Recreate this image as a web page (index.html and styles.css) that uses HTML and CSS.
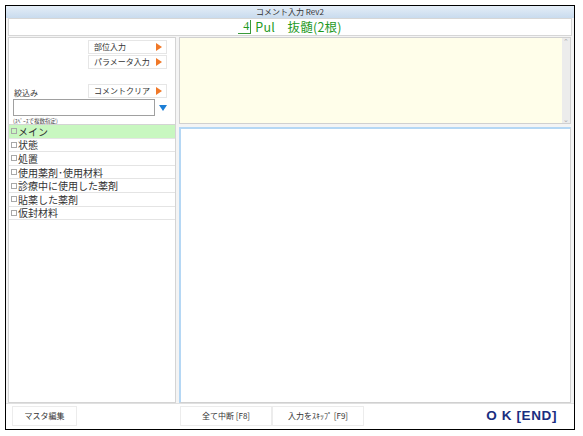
FILE: index.html
```html
<!DOCTYPE html>
<html lang="ja">
<head>
<meta charset="utf-8">
<title>コメント入力 Rev2</title>
<link rel="stylesheet" href="styles.css">
</head>
<body>
<div class="window">
  <div class="titlebar">コメント入力 Rev2</div>
  <div class="header"><span class="tooth">4</span><span class="hdr-text">Pul　抜髄(2根)</span></div>
  <div class="main">
    <div class="left">
      <div class="tools">
        <div class="btn-row r1"><div class="tbtn">部位入力<span class="tri"></span></div></div>
        <div class="btn-row"><div class="tbtn">パラメータ入力<span class="tri"></span></div></div>
        <div class="filter-row">
          <div class="filter-label">絞込み</div>
          <div class="tbtn">コメントクリア<span class="tri"></span></div>
        </div>
        <div class="input-row">
          <div class="input"></div>
          <span class="down"></span>
        </div>
        <div class="hint">(ｽﾍﾟｰｽで複数指定)</div>
      </div>
      <div class="list">
        <div class="item sel"><span class="cb"></span>メイン</div>
        <div class="item"><span class="cb"></span>状態</div>
        <div class="item"><span class="cb"></span>処置</div>
        <div class="item"><span class="cb"></span>使用薬剤･使用材料</div>
        <div class="item"><span class="cb"></span>診療中に使用した薬剤</div>
        <div class="item"><span class="cb"></span>貼薬した薬剤</div>
        <div class="item"><span class="cb"></span>仮封材料</div>
      </div>
    </div>
    <div class="right">
      <div class="memo">
        <div class="scroll"><span class="up">&#8963;</span><span class="dn">&#8964;</span></div>
      </div>
      <div class="editor"></div>
    </div>
  </div>
  <div class="footer">
    <div class="fbtn master">マスタ編集</div>
    <div class="fbtn stop">全て中断 [F8]</div>
    <div class="fbtn skip">入力をｽｷｯﾌﾟ [F9]</div>
    <div class="ok">O K&nbsp;[END]</div>
  </div>
</div>
</body>
</html>
```
FILE: styles.css
```css
* { box-sizing: border-box; }
html, body { margin: 0; padding: 0; background: #fff; }
body { font-family: "Noto Sans CJK JP", "Noto Sans", sans-serif; }

.window {
  margin: 5px 0 0 5px;
  width: 570px;
  height: 425px;
  border: 1px solid #000;
  background: #f4f4f4;
  display: flex;
  flex-direction: column;
}
.titlebar {
  height: 12px;
  background: linear-gradient(#e4edf7, #c9dbee);
  font-size: 8px;
  line-height: 12px;
  text-align: center;
  color: #333;
}
.header {
  height: 18px;
  margin: 0 2px 0 2px;
  background: #fff;
  border: 1px solid #d6d6d6;
  display: flex;
  justify-content: center;
  align-items: center;
  color: #1f9a1f;
  font-size: 12.5px;
  line-height: 16px;
}
.tooth {
  display: inline-block;
  padding: 0 1px 0 5px;
  border-bottom: 1px solid #3a9a3a;
  border-right: 1px solid #3a9a3a;
  line-height: 13px;
  height: 14px;
  margin-right: 4px;
  font-size: 12px;
  font-family: "Liberation Serif", serif;
}
.hdr-text { letter-spacing: 0.2px; }

.main {
  flex: 1;
  display: flex;
  gap: 3px;
  padding: 1px 3px 0 2px;
}
.left {
  width: 168px;
  display: flex;
  flex-direction: column;
  border: 1px solid #d4d4d4;
  background: #fff;
}
.tools {
  height: 87px;
  padding: 2px 8px 0 4px;
  border-bottom: 1px solid #d4d4d4;
  display: flex;
  flex-direction: column;
}
.btn-row { display: flex; justify-content: flex-end; margin-bottom: 1px; }
.tbtn {
  width: 79px;
  height: 14px;
  border: 1px solid #e6e6e6;
  background: #fff;
  font-size: 8px;
  line-height: 12px;
  padding-left: 5px;
  position: relative;
  color: #333;
}
.tri {
  position: absolute;
  right: 4px;
  top: 2px;
  width: 0; height: 0;
  border-top: 4px solid transparent;
  border-bottom: 4px solid transparent;
  border-left: 6px solid #f07828;
}
.filter-row {
  margin-top: 14px;
  display: flex;
  justify-content: space-between;
  align-items: flex-end;
}
.filter-label { font-size: 8px; color: #333; line-height: 10px; margin-left: 1px; }
.input-row { display: flex; align-items: center; margin-top: 1px; }
.input {
  width: 142px;
  height: 17px;
  border: 1px solid #a0a0a0;
  background: #fff;
}
.down {
  margin-left: 4px;
  width: 0; height: 0;
  border-left: 4px solid transparent;
  border-right: 4px solid transparent;
  border-top: 6px solid #1c7ed6;
}
.hint { font-size: 5.5px; color: #444; line-height: 8px; margin-top: 1px; }

.list { flex: 1; }
.item {
  height: 13.6px;
  font-size: 10px;
  line-height: 13px;
  color: #333;
  border-bottom: 1px solid #e4e4e4;
  padding-left: 2px;
  display: flex;
  align-items: center;
}
.cb {
  width: 6px;
  height: 6px;
  border: 1px solid #a8a8a8;
  margin-right: 1px;
  flex: none;
}
.item.sel { background: #c8f7c0; }

.right {
  flex: 1;
  display: flex;
  flex-direction: column;
  gap: 3px;
}
.memo {
  height: 87px;
  background: #fffeea;
  border: 1px solid #d0d0d0;
  display: flex;
  justify-content: flex-end;
}
.scroll {
  width: 8px;
  background: #ececec;
  display: flex;
  flex-direction: column;
  justify-content: space-between;
  align-items: center;
  color: #aaa;
  font-size: 7px;
  line-height: 7px;
}
.editor {
  flex: 1;
  background: #fff;
  border: 1px solid #d0d0d0;
  border-top: 2px solid #b5d7f4;
  border-left: 2px solid #b5d7f4;
}

.footer {
  height: 26px;
  display: flex;
  align-items: center;
  padding: 0 0 2px 4px;
  border-top: 1px solid #e0e0e0;
  background: #fff;
}
.fbtn {
  height: 20px;
  border: 1px solid #ececec;
  font-size: 8px;
  line-height: 18px;
  text-align: center;
  color: #333;
}
.master { width: 65px; margin-left: 2px; }
.stop { width: 92px; margin-left: 103px; }
.skip { width: 92px; }
.ok {
  margin-left: auto;
  margin-right: 17px;
  font-family: "Liberation Sans", Arial, sans-serif;
  font-weight: bold;
  font-size: 13.5px;
  color: #1a2e80;
  letter-spacing: 0.6px;
}
```
